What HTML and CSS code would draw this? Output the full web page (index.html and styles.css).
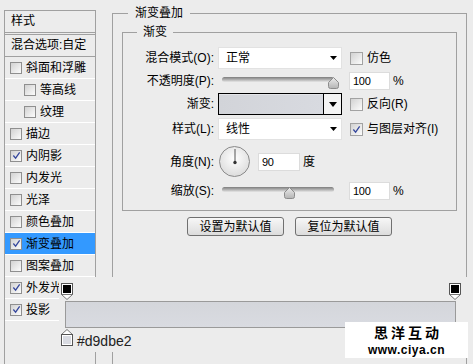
FILE: index.html
```html
<!DOCTYPE html>
<html lang="zh">

<head>
    <meta charset="UTF-8" />
    <meta name="viewport" content="width=device-width, initial-scale=1.0" />
    <title>图层样式 - 渐变叠加</title>
    <link rel="stylesheet" href="styles.css">
</head>

<body>
    <div class="dialog">
        <aside class="styles-panel">
            <div class="panel-head">样式</div>
            <div class="panel-blend">混合选项:自定</div>
            <ul class="effect-list">
                <li class="effect"><span class="check"></span>斜面和浮雕</li>
                <li class="effect sub"><span class="check"></span>等高线</li>
                <li class="effect sub"><span class="check"></span>纹理</li>
                <li class="effect"><span class="check"></span>描边</li>
                <li class="effect"><span class="check"><svg viewBox="0 0 10 10"><path d="M1.5 5 L4 8 L8.5 1.5" /></svg></span>内阴影</li>
                <li class="effect"><span class="check"></span>内发光</li>
                <li class="effect"><span class="check"></span>光泽</li>
                <li class="effect"><span class="check"></span>颜色叠加</li>
                <li class="effect active"><span class="check"><svg viewBox="0 0 10 10"><path d="M1.5 5 L4 8 L8.5 1.5" /></svg></span>渐变叠加</li>
                <li class="effect"><span class="check"></span>图案叠加</li>
                <li class="effect"><span class="check"><svg viewBox="0 0 10 10"><path d="M1.5 5 L4 8 L8.5 1.5" /></svg></span>外发光</li>
                <li class="effect"><span class="check"><svg viewBox="0 0 10 10"><path d="M1.5 5 L4 8 L8.5 1.5" /></svg></span>投影</li>
            </ul>
        </aside>

        <fieldset class="section">
            <legend>渐变叠加</legend>
            <fieldset class="subsection">
                <legend>渐变</legend>

                <div class="field">
                    <span class="field-label">混合模式(O):</span>
                    <div class="select">正常<svg class="caret" width="7" height="4" viewBox="0 0 7 4"><path d="M0 0H7L3.5 4Z" /></svg></div>
                    <label class="opt"><span class="check"></span>仿色</label>
                </div>

                <div class="field">
                    <span class="field-label">不透明度(P):</span>
                    <div class="slider">
                        <div class="slider-track"></div>
                        <svg class="slider-thumb" style="left: 110px" width="11" height="12" viewBox="0 0 11 12">
                            <defs>
                                <linearGradient id="thumbFill" x1="0" y1="0" x2="0" y2="1">
                                    <stop offset="0" stop-color="#ececec" />
                                    <stop offset="1" stop-color="#b4b4b4" />
                                </linearGradient>
                            </defs>
                            <path d="M5.5 0.5 L10.5 5.5 V9.5 Q10.5 11.5 8.5 11.5 H2.5 Q0.5 11.5 0.5 9.5 V5.5 Z" fill="url(#thumbFill)" stroke="#8c8c8c" />
                        </svg>
                    </div>
                    <input class="num" type="text" value="100" />
                    <span class="unit">%</span>
                </div>

                <div class="field">
                    <span class="field-label">渐变:</span>
                    <div class="grad-field">
                        <div class="grad-swatch"></div>
                        <div class="grad-button"><svg width="8" height="5" viewBox="0 0 8 5"><path d="M0 0H8L4 5Z" /></svg></div>
                    </div>
                    <label class="opt"><span class="check"></span>反向(R)</label>
                </div>

                <div class="field field-gap">
                    <span class="field-label">样式(L):</span>
                    <div class="select">线性<svg class="caret" width="7" height="4" viewBox="0 0 7 4"><path d="M0 0H7L3.5 4Z" /></svg></div>
                    <label class="opt"><span class="check"><svg viewBox="0 0 10 10"><path d="M1.5 5 L4 8 L8.5 1.5" /></svg></span>与图层对齐(I)</label>
                </div>

                <div class="field field-angle">
                    <span class="field-label">角度(N):</span>
                    <svg class="dial" width="31" height="31" viewBox="0 0 31 31">
                        <defs>
                            <radialGradient id="dialFill" cx="50%" cy="40%" r="60%">
                                <stop offset="0" stop-color="#ffffff" />
                                <stop offset="1" stop-color="#dcdcdc" />
                            </radialGradient>
                        </defs>
                        <circle cx="15.5" cy="15.5" r="15" fill="url(#dialFill)" stroke="#8a8a8a" />
                        <line x1="16" y1="16" x2="16" y2="3" stroke="#555" />
                        <circle cx="16" cy="16.5" r="1.7" fill="#333" />
                    </svg>
                    <input class="num num-angle" type="text" value="90" />
                    <span class="unit">度</span>
                </div>

                <div class="field field-scale">
                    <span class="field-label">缩放(S):</span>
                    <div class="slider">
                        <div class="slider-track"></div>
                        <svg class="slider-thumb" style="left: 66px" width="11" height="12" viewBox="0 0 11 12">
                            <path d="M5.5 0.5 L10.5 5.5 V9.5 Q10.5 11.5 8.5 11.5 H2.5 Q0.5 11.5 0.5 9.5 V5.5 Z" fill="url(#thumbFill)" stroke="#8c8c8c" />
                        </svg>
                    </div>
                    <input class="num" type="text" value="100" />
                    <span class="unit">%</span>
                </div>
            </fieldset>

            <div class="actions">
                <button class="btn" type="button">设置为默认值</button>
                <button class="btn" type="button">复位为默认值</button>
            </div>
        </fieldset>
    </div>

    <!-- 渐变编辑条，叠在对话框上面 -->
    <div class="gradient-editor">
        <div class="stops">
            <svg width="12" height="17" viewBox="0 0 12 17">
                <rect x="0.5" y="0.5" width="11" height="11" fill="#fff" stroke="#555" />
                <rect x="2" y="2" width="8" height="8" fill="#000" />
                <path d="M0.5 11.5 H11.5 L6 16.5 Z" fill="#fff" stroke="#777" />
            </svg>
            <svg width="12" height="17" viewBox="0 0 12 17">
                <rect x="0.5" y="0.5" width="11" height="11" fill="#fff" stroke="#555" />
                <rect x="2" y="2" width="8" height="8" fill="#000" />
                <path d="M0.5 11.5 H11.5 L6 16.5 Z" fill="#fff" stroke="#777" />
            </svg>
        </div>
        <div class="bar"></div>
        <div class="stop-row">
            <svg width="12" height="17" viewBox="0 0 12 17">
                <path d="M6 0.5 L11.5 5.5 H0.5 Z" fill="#fff" stroke="#777" />
                <rect x="0.5" y="5.5" width="11" height="11" fill="#fff" stroke="#555" />
                <rect x="2" y="7" width="8" height="8" fill="#d9dbe2" />
            </svg>
            <span class="stop-hex">#d9dbe2</span>
        </div>
    </div>

    <div class="watermark">
        <div class="watermark-name">思洋互动</div>
        <div class="watermark-url">www.ciya.cn</div>
    </div>
</body>

</html>
```

FILE: styles.css
```css
* {
    box-sizing: border-box;
}

body {
    position: relative;
    height: 364px;
    margin: 0;
    overflow: hidden;
    background: #ececec;
    color: #000;
    font-family: "Liberation Sans", "Noto Sans CJK SC", sans-serif;
    font-size: 12px;
    line-height: 14px;
}

.dialog {
    display: flex;
    align-items: flex-start;
}

/* 左侧样式列表 */
.styles-panel {
    flex: none;
    width: 92px;
    height: 354px;
    margin: 10px 0 0 4px;
    border: 1px solid #a0a0a0;
    border-bottom: 0;
}

.panel-head {
    height: 24px;
    padding-left: 6px;
    line-height: 21px;
    border-bottom: 3px double #a0a0a0;
}

.panel-blend {
    height: 22px;
    padding-left: 6px;
    line-height: 21px;
    border-bottom: 1px solid #a0a0a0;
}

.effect-list {
    margin: 0;
    padding: 0;
    list-style: none;
}

.effect {
    display: flex;
    align-items: center;
    gap: 4px;
    height: 22px;
    padding-left: 5px;
    border-bottom: 1px solid #fff;
    white-space: nowrap;
}

.effect.sub {
    padding-left: 19px;
}

.effect.active {
    background: #3399ff;
}

.check {
    display: flex;
    flex: none;
    align-items: center;
    justify-content: center;
    width: 12px;
    height: 12px;
    border: 1px solid #8f8f8f;
    background: linear-gradient(135deg, #d2d2d2, #fcfcfc);
}

.check svg {
    width: 9px;
    height: 9px;
    fill: none;
    stroke: #34469c;
    stroke-width: 1.4;
}

/* 右侧分组 */
.section {
    flex: none;
    width: 355px;
    height: 358px;
    min-width: 0;
    margin: 6px 0 0 16px;
    padding: 0;
    border: 1px solid #a0a0a0;
    border-bottom: 0;
}

.section legend {
    margin-left: 15px;
    padding: 0 7px;
    line-height: 15px;
}

.subsection {
    min-width: 0;
    margin: 4px 9px 0;
    padding: 7px 0 9px;
    border: 1px solid #a0a0a0;
}

.subsection legend {
    margin-left: 14px;
    padding: 0 6px;
}

.field {
    display: flex;
    align-items: center;
    height: 22px;
    white-space: nowrap;
}

.field + .field {
    margin-top: 1px;
}

.field.field-gap {
    margin-top: 3px;
}

.field.field-angle {
    height: 33px;
    margin-top: 5px;
}

.field.field-scale {
    height: 20px;
    margin-top: 3px;
}

.field-label {
    flex: none;
    width: 91px;
    margin-right: 4px;
    text-align: right;
}

.select {
    display: flex;
    flex: none;
    align-items: center;
    justify-content: space-between;
    width: 124px;
    height: 22px;
    padding: 0 4px 0 7px;
    background: #fff;
    border: 1px solid #e2e2e2;
}

.caret {
    fill: #000;
}

.opt {
    display: flex;
    align-items: center;
    gap: 4px;
    margin-left: 8px;
}

.opt .check {
    width: 13px;
    height: 13px;
    border-color: #a2a2a2;
}

.slider {
    position: relative;
    flex: none;
    width: 124px;
    height: 18px;
    padding: 5px 8px 0 4px;
}

.slider-track {
    height: 5px;
    border-radius: 3px;
    background: linear-gradient(#7d7d7d, #b9b9b9 60%, #e6e6e6);
}

.slider-thumb {
    position: absolute;
    top: 5px;
}

.num {
    flex: none;
    width: 41px;
    height: 18px;
    margin: 0 0 0 7px;
    padding: 0 0 0 3px;
    border: 1px solid #dcdcdc;
    background: #fff;
    color: #000;
    font-family: "Liberation Sans", sans-serif;
    font-size: 11px;
    letter-spacing: -0.3px;
}

.num-angle {
    width: 42px;
    margin-left: 8px;
}

.unit {
    margin-left: 3px;
}

.grad-field {
    display: flex;
    flex: none;
    width: 124px;
    height: 22px;
    border: 1px solid #000;
}

.grad-swatch {
    flex: 1;
    border-top: 1px solid #e4e5e9;
    background: linear-gradient(90deg, #d2d4d9, #d8dae0);
}

.grad-button {
    display: flex;
    align-items: center;
    justify-content: center;
    width: 18px;
    border-left: 1px solid #000;
    background: #f4f4f4;
}

.dial {
    flex: none;
    margin-left: 1px;
}

.actions {
    display: flex;
    justify-content: center;
    gap: 11px;
    margin-top: 6px;
}

.btn {
    width: 97px;
    height: 19px;
    padding: 0;
    border: 1px solid #707070;
    border-radius: 3px;
    background: linear-gradient(#f7f7f7, #dcdcdc);
    color: #000;
    font: inherit;
    line-height: 16px;
}

/* 渐变编辑条 */
.gradient-editor {
    position: absolute;
    top: 277px;
    left: 59px;
    width: 411px;
    height: 75px;
    padding: 6px 0 0 2px;
    background: #ececec;
}

.stops {
    display: flex;
    justify-content: space-between;
    width: 400px;
    height: 17px;
}

.stops svg,
.stop-row svg {
    display: block;
}

.bar {
    width: 391px;
    height: 27px;
    margin: 1px 0 0 4px;
    border: 1px solid #9a9a9a;
    background: linear-gradient(#d4d6db, #d9dbe1);
}

.stop-row {
    display: flex;
    align-items: flex-start;
    gap: 4px;
    margin-top: 1px;
}

.stop-hex {
    margin-top: 5px;
    color: #222;
    font-size: 14px;
    line-height: 14px;
}

.watermark {
    position: absolute;
    top: 322px;
    left: 345px;
    width: 123px;
    height: 36px;
    background: #fff;
    text-align: center;
}

.watermark-name {
    font-family: "Noto Sans CJK SC", sans-serif;
    font-size: 14px;
    font-weight: bold;
    line-height: 21px;
    letter-spacing: 3px;
    text-indent: 3px;
}

.watermark-url {
    font-family: "Liberation Sans", sans-serif;
    font-size: 12px;
    font-weight: bold;
    line-height: 14px;
    letter-spacing: 0.5px;
}
```
